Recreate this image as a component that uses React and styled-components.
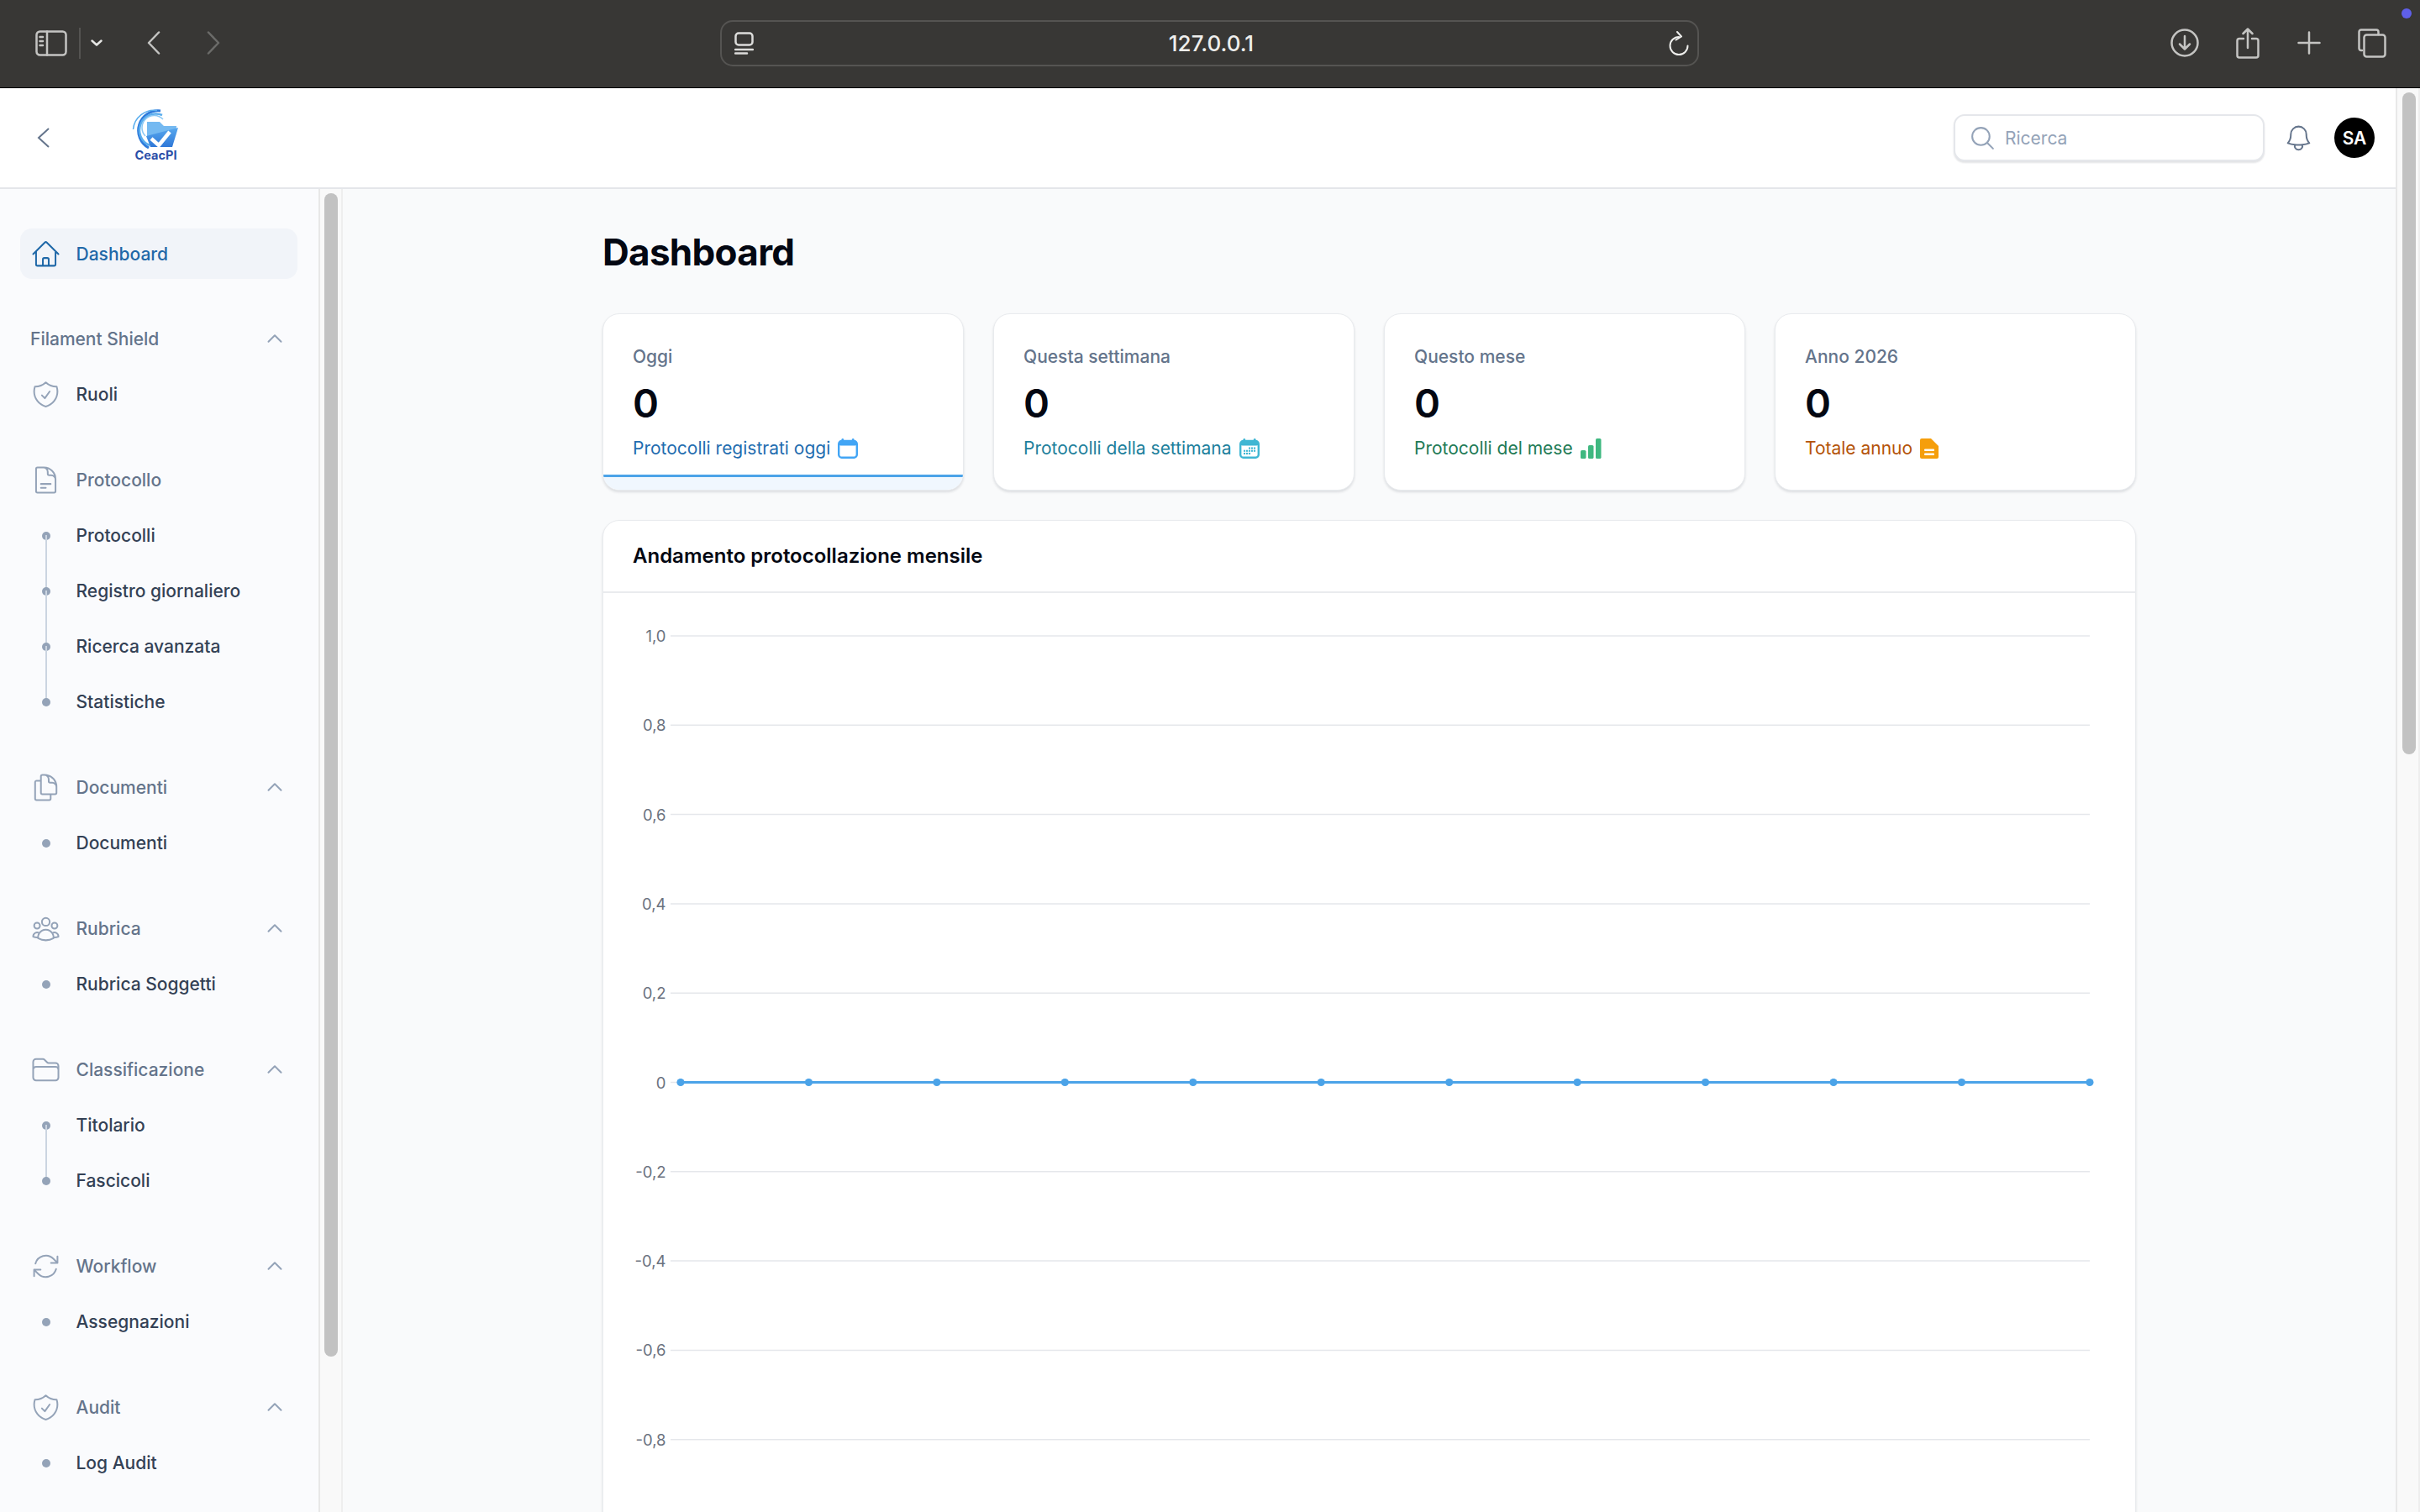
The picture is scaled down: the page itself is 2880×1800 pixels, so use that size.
import React from 'react'
import styled, { createGlobalStyle } from 'styled-components'
import {
  HiOutlineHome,
  HiOutlineShieldCheck,
  HiOutlineDocumentText,
  HiOutlineDocumentDuplicate,
  HiOutlineUserGroup,
  HiOutlineFolder,
  HiOutlineArrowPath,
  HiOutlineChevronUp,
  HiOutlineMagnifyingGlass,
  HiOutlineBell,
} from 'react-icons/hi2'

const GlobalStyle = createGlobalStyle`
  html, body {
    margin: 0;
    width: 2880px;
    height: 1800px;
    overflow: hidden;
    background: #f9fafb;
    font-family: Inter, "Liberation Sans", sans-serif;
  }
  * { box-sizing: border-box; }
`

const Screen = styled.div`
  width: 2880px;
  height: 1800px;
  display: flex;
  flex-direction: column;
  overflow: hidden;
`

/* browser chrome */
const BrowserBar = styled.div`
  position: relative;
  height: 105px;
  flex: none;
  display: grid;
  grid-template-columns: 857px 1165px 1fr;
  align-items: center;
  padding-bottom: 2px;
  background: #383735;
  border-bottom: 1px solid #000;
`
const ToolGroup = styled.div`
  display: flex;
  align-items: center;
  justify-content: ${p => (p.$end ? 'flex-end' : 'flex-start')};
  padding: ${p => (p.$end ? '0 40px 0 0' : '0 0 0 42px')};
`
const ToolIcon = styled.svg`
  flex: none;
  margin-left: ${p => p.$ml || 0}px;
  fill: none;
  stroke: ${p => p.$color || '#c4c4c2'};
  stroke-width: ${p => p.$sw || 2.5};
  stroke-linecap: round;
  stroke-linejoin: round;
`
const ToolDivider = styled.div`
  width: 2px;
  height: 37px;
  margin-left: 14px;
  background: #555452;
`
const UrlBox = styled.div`
  height: 55px;
  display: flex;
  align-items: center;
  justify-content: space-between;
  padding: 0 10px 0 15px;
  border: 2px solid #555452;
  border-radius: 15px;
`
const UrlText = styled.span`
  font-size: 26px;
  font-weight: 500;
  color: #eeeeec;
`
const NotifyDot = styled.div`
  position: absolute;
  top: 10px;
  right: 10px;
  width: 12px;
  height: 12px;
  border-radius: 50%;
  background: #5f5fe8;
`

/* page */
const PageRow = styled.div`
  flex: 1;
  min-height: 0;
  display: flex;
`
const PageColumn = styled.div`
  flex: 1;
  min-width: 0;
  display: flex;
  flex-direction: column;
`
const ScrollTrack = styled.div`
  flex: none;
  width: ${p => p.$w}px;
  padding: 5px 0 0 ${p => p.$pl}px;
  background: #f9f9f9;
  border-left: 2px solid #e8e8e8;
  border-right: 2px solid #eeeeee;
`
const ScrollThumb = styled.div`
  width: 16px;
  height: ${p => p.$h}px;
  border-radius: 8px;
  background: #c2c2c2;
`

const Header = styled.header`
  height: 120px;
  flex: none;
  display: flex;
  align-items: center;
  padding: 0 25px 0 44px;
  background: #fff;
  border-bottom: 2px solid #e4e6ea;
`
const BackArrow = styled.svg`
  flex: none;
  fill: none;
  stroke: #64748b;
  stroke-width: 2;
`
const LogoBlock = styled.div`
  margin: 0 0 7px 98px;
  width: 57px;
  display: flex;
  flex-direction: column;
  align-items: center;
  gap: 1px;
`
const LogoName = styled.span`
  font-size: 14.5px;
  line-height: 14px;
  font-weight: 700;
  color: #2b4fa8;
`
const HeaderRight = styled.div`
  margin-left: auto;
  display: flex;
  align-items: center;
`
const SearchBox = styled.div`
  width: 370px;
  height: 56px;
  display: flex;
  align-items: center;
  gap: 10px;
  padding-left: 16px;
  font-size: 21px;
  color: #94a3b8;
  background: #fff;
  border: 2px solid #e5e7eb;
  border-radius: 13px;
  box-shadow: 0 2px 2px rgba(15, 23, 42, 0.12);

  svg {
    font-size: 33px;
    flex: none;
  }
`
const BellButton = styled.div`
  margin: 0 24px 0 22px;
  display: flex;
  font-size: 37px;
  color: #64748b;

  svg {
    stroke-width: 1.3;
  }
`
const Avatar = styled.div`
  width: 48px;
  height: 48px;
  display: flex;
  align-items: center;
  justify-content: center;
  border-radius: 50%;
  background: #000;
  color: #fff;
  font-size: 21px;
  font-weight: 600;
`

const Body = styled.div`
  flex: 1;
  min-height: 0;
  display: flex;
`

/* sidebar */
const Sidebar = styled.aside`
  flex: none;
  width: 379px;
  padding: 47px 25px 0 24px;
  background: #fafbfd;
  overflow: hidden;
`
const Nav = styled.nav`
  display: flex;
  flex-direction: column;
  gap: 41.2px;
`
const NavGroup = styled.div`
  display: flex;
  flex-direction: column;
  gap: 6.8px;
`
const NavRow = styled.div`
  position: relative;
  height: 60px;
  display: flex;
  align-items: center;
  gap: 17.5px;
  padding: 0 12px;
  font-size: 21px;
  font-weight: 500;
  color: ${p => (p.$active ? '#1f68a8' : p.$muted ? '#64748b' : '#334155')};
  background: ${p => (p.$active ? '#f1f4f9' : 'transparent')};
  border-radius: 14px;
`
const NavIcon = styled.span`
  flex: none;
  width: 37px;
  display: flex;
  justify-content: center;
  font-size: 37px;
  color: ${p => (p.$active ? '#1f68a8' : '#94a3b8')};

  svg {
    stroke-width: 1.3;
  }
`
const NavLabel = styled.span`
  flex: 1;
`
const GroupChevron = styled.span`
  display: flex;
  font-size: 24px;
  color: #94a3b8;
  margin-right: 3px;

  svg {
    stroke-width: 2;
  }
`
const SubList = styled.div`
  display: flex;
  flex-direction: column;
  gap: 6px;
`
const BulletCell = styled.span`
  position: relative;
  flex: none;
  width: 37px;
  display: flex;
  justify-content: center;

  &::before {
    content: '';
    width: 10px;
    height: 10px;
    border-radius: 50%;
    background: #94a3b8;
  }
  &::after {
    content: ${p => (p.$line ? "''" : 'none')};
    position: absolute;
    left: 17.5px;
    top: 4px;
    width: 2px;
    height: 66px;
    background: #cbd5e1;
  }
`

/* main */
const Main = styled.main`
  flex: 1;
  min-width: 0;
  padding-top: 48px;
  overflow: hidden;
  background: #f9fafb;
`
const Content = styled.div`
  width: 1825px;
  margin: 0 auto;
`
const Title = styled.h1`
  margin: 0 0 46px;
  font-size: 44px;
  line-height: 54px;
  font-weight: 700;
  letter-spacing: -0.7px;
  color: #030712;
`
const CardRow = styled.div`
  display: grid;
  grid-template-columns: repeat(4, 1fr);
  gap: 35px;
  margin-bottom: 35px;
`
const StatCard = styled.section`
  height: 211px;
  display: flex;
  flex-direction: column;
  justify-content: space-between;
  overflow: hidden;
  background: #fff;
  border: 1.5px solid #e9ebee;
  border-radius: 20px;
  box-shadow: 0 2px 3px rgba(15, 23, 42, 0.12);
`
const StatBody = styled.div`
  display: flex;
  flex-direction: column;
  padding: 35px 35px 0;
`
const StatLabel = styled.div`
  font-size: 21px;
  line-height: 32px;
  font-weight: 500;
  color: #64748b;
`
const StatValue = styled.div`
  margin-top: 12px;
  font-size: 47px;
  line-height: 54px;
  font-weight: 600;
  color: #030712;
`
const StatDesc = styled.div`
  margin-top: 11px;
  display: flex;
  align-items: center;
  gap: 9px;
  font-size: 21px;
  line-height: 32px;
  font-weight: 400;
  color: ${p => p.$color};
`
const StatStrip = styled.div`
  height: 18px;
  background: ${p => (p.$on ? '#f0f7fe' : 'transparent')};
  border-top: 3.5px solid ${p => (p.$on ? '#4ba3e8' : 'transparent')};
`
const ChartCard = styled.section`
  height: 1300px;
  background: #fff;
  border: 1.5px solid #e9ebee;
  border-radius: 20px;
  box-shadow: 0 2px 3px rgba(15, 23, 42, 0.12);
`
const ChartHead = styled.div`
  height: 86px;
  display: flex;
  align-items: center;
  padding: 0 35px 2px;
  font-size: 24px;
  font-weight: 600;
  color: #030712;
  border-bottom: 2px solid #e9ebee;
`
const ChartSvg = styled.svg`
  display: block;
`
const GridLine = styled.line`
  stroke: #e5e7eb;
  stroke-width: 1.5;
`
const TickLabel = styled.text`
  font-size: 18.5px;
  fill: #6b7280;
  text-anchor: end;
  dominant-baseline: central;
`

const groups = [
  { label: 'Filament Shield', items: [{ label: 'Ruoli', icon: HiOutlineShieldCheck }] },
  { label: 'Protocollo', icon: HiOutlineDocumentText, noChevron: true, line: true, items: [{ label: 'Protocolli' }, { label: 'Registro giornaliero' }, { label: 'Ricerca avanzata' }, { label: 'Statistiche' }] },
  { label: 'Documenti', icon: HiOutlineDocumentDuplicate, items: [{ label: 'Documenti' }] },
  { label: 'Rubrica', icon: HiOutlineUserGroup, items: [{ label: 'Rubrica Soggetti' }] },
  { label: 'Classificazione', icon: HiOutlineFolder, line: true, items: [{ label: 'Titolario' }, { label: 'Fascicoli' }] },
  { label: 'Workflow', icon: HiOutlineArrowPath, items: [{ label: 'Assegnazioni' }] },
  { label: 'Audit', icon: HiOutlineShieldCheck, items: [{ label: 'Log Audit' }] },
]

// dot grid of the week calendar: [column, row]
const weekDots = [[2, 0], [3, 0], [4, 0], [0, 1], [1, 1], [2, 1], [3, 1], [4, 1], [0, 2], [1, 2], [2, 2]]

const CalendarIcon = ({ color, dots }) => (
  <svg width="24" height="24" viewBox="0 0 24 24">
    <rect x="4.5" y="0" width="2.6" height="5" rx="1.3" fill={color} />
    <rect x="16.9" y="0" width="2.6" height="5" rx="1.3" fill={color} />
    <rect x="1.2" y="3" width="21.6" height="19.8" rx="3.5" fill="#fff" stroke={color} strokeWidth="2.4" />
    <rect x="1.2" y="3" width="21.6" height="5.5" rx="2.5" fill={color} />
    {dots && weekDots.map(([c, r]) => (
      <rect key={`${c}-${r}`} x={5 + c * 3} y={10.5 + r * 3.2} width="2.1" height="2.1" fill={color} />
    ))}
  </svg>
)
const BarsIcon = () => (
  <svg width="25" height="24" viewBox="0 0 25 24" fill="#3fb880">
    <rect x="0" y="14" width="6.5" height="10" rx="1.6" />
    <rect x="9" y="8" width="6.5" height="16" rx="1.6" />
    <rect x="18" y="0" width="6.5" height="24" rx="1.6" />
  </svg>
)
const DocIcon = () => (
  <svg width="22" height="24" viewBox="0 0 22 24">
    <path d="M2 0h11l9 9v13a2 2 0 0 1-2 2H2a2 2 0 0 1-2-2V2a2 2 0 0 1 2-2z" fill="#f59e0b" />
    <rect x="5" y="12.5" width="12" height="2.4" rx="1" fill="#fff" />
    <rect x="5" y="17.5" width="12" height="2.4" rx="1" fill="#fff" />
  </svg>
)

const stats = [
  { label: 'Oggi', desc: 'Protocolli registrati oggi', color: '#1f6db0', icon: <CalendarIcon color="#42a5f5" />, strip: true },
  { label: 'Questa settimana', desc: 'Protocolli della settimana', color: '#1d7f9c', icon: <CalendarIcon color="#3fb6d3" dots /> },
  { label: 'Questo mese', desc: 'Protocolli del mese', color: '#217a55', icon: <BarsIcon /> },
  { label: 'Anno 2026', desc: 'Totale annuo', color: '#b45309', icon: <DocIcon /> },
]

const ticks = ['1,0', '0,8', '0,6', '0,4', '0,2', '0', '-0,2', '-0,4', '-0,6', '-0,8']

const LogoMark = () => (
  <svg width="57" height="47" viewBox="0 0 57 47" fill="none">
    <defs>
      <linearGradient id="logoFold" x1="0" y1="0" x2="0" y2="1">
        <stop offset="0" stopColor="#58a8ee" />
        <stop offset="1" stopColor="#2f78d8" />
      </linearGradient>
    </defs>
    <path d="M34 2A23.5 23.5 0 0 0 20 46" stroke="#2f7bdb" strokeWidth="3" />
    <path d="M30 1.5A25 25 0 0 0 1.5 24" stroke="#5aaeee" strokeWidth="1.5" />
    <path d="M36 7A19 19 0 0 0 21 43" stroke="#5aaeee" strokeWidth="2.5" />
    <path d="M37 12A14 14 0 0 0 16 32" stroke="#8cc8f4" strokeWidth="1.5" />
    <path d="M18 15h15l5 5h15l-1 12H18z" fill="#74b9f1" />
    <path d="M17 32 55 22l-7 23H22z" fill="url(#logoFold)" />
    <path d="M23 35l9 8L45 27" stroke="#fff" strokeWidth="4.5" strokeLinejoin="round" />
  </svg>
)

const App = () => {
  const rowH = 106.3
  const firstY = 51
  return (
    <Screen>
      <GlobalStyle />
      <BrowserBar>
        <ToolGroup>
          <ToolIcon width="38" height="31" viewBox="0 0 38 31">
            <rect x="1.5" y="1.5" width="35" height="28" rx="4" />
            <path d="M14 1.5v28M5.5 8h3.5M5.5 13h3.5M5.5 18h3.5" />
          </ToolIcon>
          <ToolDivider />
          <ToolIcon width="14" height="8" viewBox="0 0 14 8" $ml={12} $color="#e6e6e4">
            <path d="M1.5 1.5 7 6.5l5.5-5" />
          </ToolIcon>
          <ToolIcon width="16" height="28" viewBox="0 0 16 28" $ml={53}>
            <path d="M14 1.5 2 14l12 12.5" />
          </ToolIcon>
          <ToolIcon width="16" height="28" viewBox="0 0 16 28" $ml={55} $color="#6b6b69">
            <path d="M2 1.5 14 14 2 26.5" />
          </ToolIcon>
        </ToolGroup>
        <UrlBox>
          <ToolIcon width="23" height="27" viewBox="0 0 23 27" $color="#dcdcda">
            <rect x="1.5" y="1.5" width="20" height="14" rx="3.5" />
            <path d="M1 21h21M1 25.5h14" />
          </ToolIcon>
          <UrlText>127.0.0.1</UrlText>
          <ToolIcon width="24" height="29" viewBox="0 0 24 29" $color="#eeeeec" $sw={2}>
            <path d="M12 7a10.5 10.5 0 1 0 10.5 10.5" />
            <path d="M10 1l5 5.5-6.5 4" />
          </ToolIcon>
        </UrlBox>
        <ToolGroup $end>
          <ToolIcon width="34" height="34" viewBox="0 0 34 34">
            <circle cx="17" cy="17" r="15.5" />
            <path d="M17 9v15M11 18.5l6 6 6-6" />
          </ToolIcon>
          <ToolIcon width="28" height="37" viewBox="0 0 28 37" $ml={44}>
            <path d="M9 13H4a2.5 2.5 0 0 0-2.5 2.5v17.5A2.5 2.5 0 0 0 4 35.5h20a2.5 2.5 0 0 0 2.5-2.5V15.5A2.5 2.5 0 0 0 24 13h-5" />
            <path d="M14 2v22M8.5 7 14 1.5 19.5 7" />
          </ToolIcon>
          <ToolIcon width="28" height="28" viewBox="0 0 28 28" $ml={45}>
            <path d="M14 1.5v25M1.5 14h25" />
          </ToolIcon>
          <ToolIcon width="34" height="35" viewBox="0 0 34 35" $ml={44}>
            <path d="M5 26H4a2.5 2.5 0 0 1-2.5-2.5V4A2.5 2.5 0 0 1 4 1.5h18A2.5 2.5 0 0 1 24.5 4v3" />
            <rect x="7.5" y="7.5" width="25" height="26" rx="3" />
          </ToolIcon>
        </ToolGroup>
        <NotifyDot />
      </BrowserBar>

      <PageRow>
        <PageColumn>
          <Header>
            <BackArrow width="15" height="24" viewBox="0 0 15 24">
              <path d="M14 1 2 12l12 11" />
            </BackArrow>
            <LogoBlock>
              <LogoMark />
              <LogoName>CeacPI</LogoName>
            </LogoBlock>
            <HeaderRight>
              <SearchBox>
                <HiOutlineMagnifyingGlass />
                <span>Ricerca</span>
              </SearchBox>
              <BellButton><HiOutlineBell /></BellButton>
              <Avatar>SA</Avatar>
            </HeaderRight>
          </Header>

          <Body>
            <Sidebar>
              <Nav>
                <NavRow $active>
                  <NavIcon $active><HiOutlineHome /></NavIcon>
                  <NavLabel>Dashboard</NavLabel>
                </NavRow>
                {groups.map(group => (
                  <NavGroup key={group.label}>
                    <NavRow $muted>
                      {group.icon && <NavIcon><group.icon /></NavIcon>}
                      <NavLabel>{group.label}</NavLabel>
                      {!group.noChevron && <GroupChevron><HiOutlineChevronUp /></GroupChevron>}
                    </NavRow>
                    <SubList>
                      {group.items.map((item, i) => (
                        <NavRow key={item.label}>
                          {item.icon
                            ? <NavIcon><item.icon /></NavIcon>
                            : <BulletCell $line={group.line && i < group.items.length - 1} />}
                          <NavLabel>{item.label}</NavLabel>
                        </NavRow>
                      ))}
                    </SubList>
                  </NavGroup>
                ))}
              </Nav>
            </Sidebar>
            <ScrollTrack $w={29} $pl={5}><ScrollThumb $h={1385} /></ScrollTrack>

            <Main>
              <Content>
                <Title>Dashboard</Title>
                <CardRow>
                  {stats.map(stat => (
                    <StatCard key={stat.label}>
                      <StatBody>
                        <StatLabel>{stat.label}</StatLabel>
                        <StatValue>0</StatValue>
                        <StatDesc $color={stat.color}>{stat.desc}{stat.icon}</StatDesc>
                      </StatBody>
                      <StatStrip $on={stat.strip} />
                    </StatCard>
                  ))}
                </CardRow>
                <ChartCard>
                  <ChartHead>Andamento protocollazione mensile</ChartHead>
                  <ChartSvg width="1822" height="1100" viewBox="0 0 1822 1100">
                    {ticks.map((tick, i) => (
                      <g key={tick}>
                        <GridLine x1="80" x2="1769" y1={firstY + i * rowH} y2={firstY + i * rowH} />
                        <TickLabel x="74.5" y={firstY + i * rowH}>{tick}</TickLabel>
                      </g>
                    ))}
                    <line x1="92" x2="1769" y1={firstY + 5 * rowH} y2={firstY + 5 * rowH} stroke="#4ba3e8" strokeWidth="3" />
                    {Array.from({ length: 12 }, (_, i) => (
                      <circle key={i} cx={92 + i * 152.45} cy={firstY + 5 * rowH} r="4.6" fill="#4ba3e8" />
                    ))}
                  </ChartSvg>
                </ChartCard>
              </Content>
            </Main>
          </Body>
        </PageColumn>
        <ScrollTrack $w={29} $pl={6}><ScrollThumb $h={788} /></ScrollTrack>
      </PageRow>
    </Screen>
  )
}

export default App
